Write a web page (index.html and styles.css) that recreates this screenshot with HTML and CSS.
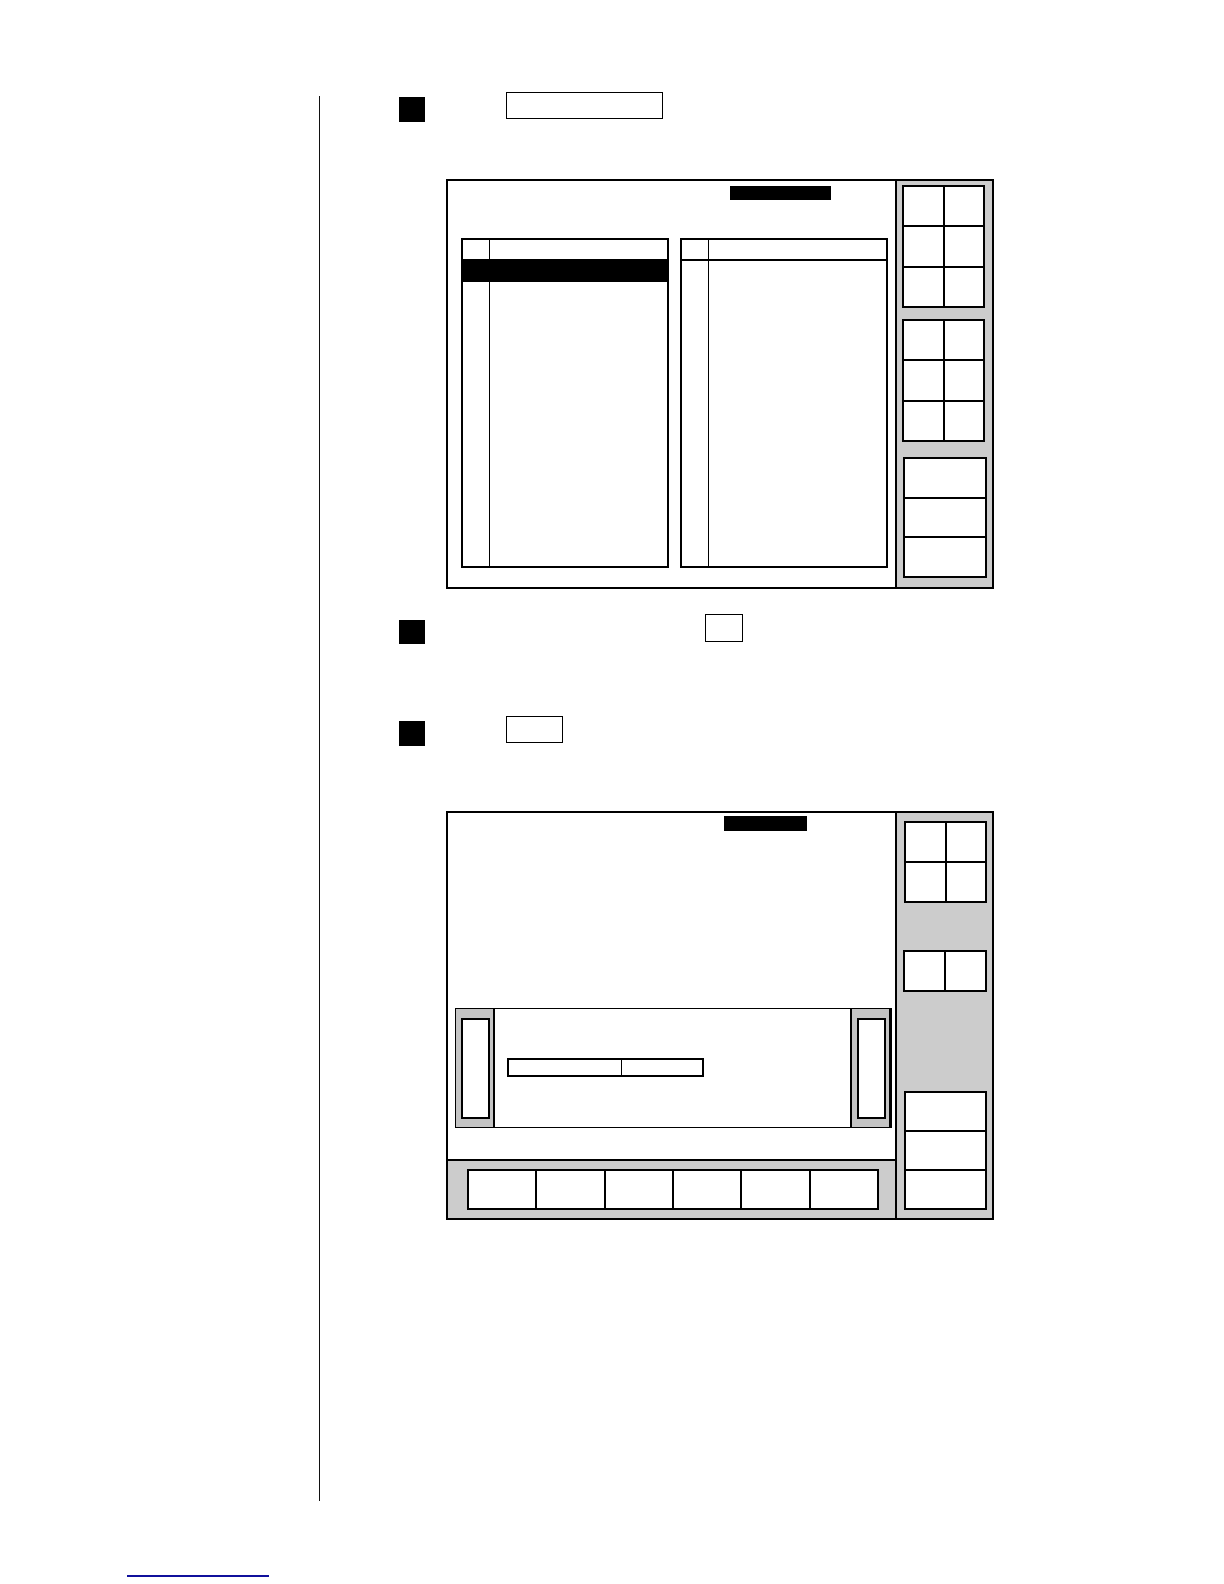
FILE: index.html
```html
<!DOCTYPE html>
<html>
<head>
<meta charset="utf-8">
<title>Screen procedure</title>
<link rel="stylesheet" href="styles.css">
</head>
<body>
<div class="page">
  <div class="rule"></div>
  <div class="content">
    <div class="step step1">
      <div class="num"></div>
      <div class="key key-wide"></div>
    </div>

    <div class="screen screen1">
      <div class="main">
        <div class="title title1"></div>
        <div class="lists">
          <div class="list">
            <div class="lh"><div class="c1"></div><div class="c2"></div></div>
            <div class="hl"></div>
            <div class="lb"><div class="c1"></div><div class="c2"></div></div>
          </div>
          <div class="list">
            <div class="lh"><div class="c1"></div><div class="c2"></div></div>
            <div class="lb"><div class="c1"></div><div class="c2"></div></div>
          </div>
        </div>
      </div>
      <div class="side side1">
        <div class="kgrid g23 s1a"><i></i><i></i><i></i><i></i><i></i><i></i></div>
        <div class="kgrid g23 s1b"><i></i><i></i><i></i><i></i><i></i><i></i></div>
        <div class="kgrid g13 s1c"><i></i><i></i><i></i></div>
      </div>
    </div>

    <div class="step step2">
      <div class="num"></div>
      <div class="key key-small"></div>
    </div>

    <div class="step step3">
      <div class="num"></div>
      <div class="key key-mid"></div>
    </div>

    <div class="screen screen2">
      <div class="main">
        <div class="title title2"></div>
        <div class="dialog">
          <div class="dpanel dleft"><div class="dbar"></div></div>
          <div class="dbody">
            <div class="field"><div class="f1"></div><div class="f2"></div></div>
          </div>
          <div class="dpanel dright"><div class="dbar"></div></div>
        </div>
        <div class="toolbar">
          <div class="tkeys"><i></i><i></i><i></i><i></i><i></i><i></i></div>
        </div>
      </div>
      <div class="side side2">
        <div class="kgrid g22 s2a"><i></i><i></i><i></i><i></i></div>
        <div class="kgrid g21 s2b"><i></i><i></i></div>
        <div class="kgrid g13 s2c"><i></i><i></i><i></i></div>
      </div>
    </div>
  </div>
</div>
<div class="footer"><div class="footline"></div></div>
</body>
</html>
```

FILE: styles.css
```css
* { box-sizing: border-box; }
html, body { margin: 0; padding: 0; background: #fff; }
body { font-family: "Liberation Sans", Arial, sans-serif; width: 1224px; }

.page { display: flex; align-items: flex-start; }
.rule { width: 1px; height: 1405px; margin: 96px 0 0 319px; background: #111; flex: none; }
.content { padding-top: 92px; display: flex; flex-direction: column; }

.step { display: flex; align-items: flex-start; }
.num { width: 26px; height: 25px; background: #000; margin-left: 79px; flex: none; }
.step1 .num { margin-top: 5px; }
.step2 { margin-top: 25px; }
.step2 .num { margin-top: 6px; height: 24px; }
.step3 { margin-top: 72px; }
.step3 .num { margin-top: 5px; }
.key { border: 1px solid #000; background: #fff; flex: none; }
.key-wide { width: 157px; height: 27px; margin-left: 81px; }
.key-small { width: 38px; height: 28px; margin-left: 280px; }
.key-mid { width: 57px; height: 27px; margin-left: 81px; }

.screen { display: flex; width: 548px; border: 2px solid #000; margin-left: 126px; flex: none; }
.screen1 { height: 410px; margin-top: 57px; }
.screen2 { height: 409px; margin-top: 65px; }
.main { width: 449px; border-right: 2px solid #000; background: #fff; display: flex; flex-direction: column; flex: none; }
.side { flex: 1; background: #cccccc; display: flex; flex-direction: column; }

.title { background: #000; flex: none; }
.title1 { width: 101px; height: 14px; margin: 5px 0 0 282px; }
.title2 { width: 83px; height: 15px; margin: 3px 0 0 276px; }

.lists { display: flex; gap: 11px; margin: 38px 0 0 13px; }
.list { width: 208px; height: 330px; border: 2px solid #000; display: flex; flex-direction: column; }
.lh { height: 21px; border-bottom: 2px solid #000; display: flex; flex: none; }
.hl { height: 21px; background: #000; flex: none; }
.lb { flex: 1; display: flex; }
.c1 { width: 27px; border-right: 1px solid #000; flex: none; }
.c2 { flex: 1; }

.kgrid { display: grid; gap: 2px; background: #000; border: 2px solid #000; flex: none; }
.kgrid i { display: block; background: #fff; }
.g23 { grid-template-columns: 1fr 1fr; grid-template-rows: 1fr 1fr 1fr; }
.g22 { grid-template-columns: 1fr 1fr; grid-template-rows: 1fr 1fr; }
.g21 { grid-template-columns: 1fr 1fr; grid-template-rows: 1fr; }
.g13 { grid-template-columns: 1fr; grid-template-rows: 1fr 1fr 1fr; }

.s1a { width: 83px; height: 123px; margin: 4px 0 0 5px; }
.s1b { width: 83px; height: 123px; margin: 11px 0 0 5px; }
.s1c { width: 84px; height: 121px; margin: 15px 0 0 6px; }
.s2a { width: 83px; height: 82px; margin: 8px 0 0 7px; }
.s2b { width: 84px; height: 42px; margin: 47px 0 0 6px; }
.s2c { width: 83px; height: 119px; margin: 99px 0 0 7px; }

.dialog { display: flex; width: 437px; height: 120px; margin: 177px 0 0 7px; border: 1px solid #000; flex: none; }
.dpanel { background: #c4c4c4; flex: none; padding-top: 9px; }
.dleft { width: 39px; border-right: 2px solid #000; padding-left: 5px; }
.dright { width: 41px; border-left: 2px solid #000; border-right: 2px solid #000; padding-left: 5px; }
.dbar { width: 29px; height: 101px; border: 2px solid #000; background: #fff; }
.dbody { flex: 1; background: #fff; padding: 49px 0 0 12px; }
.field { display: flex; width: 197px; height: 19px; border: 2px solid #000; }
.f1 { width: 113px; border-right: 1px solid #000; }
.f2 { flex: 1; }

.toolbar { margin-top: auto; height: 59px; border-top: 2px solid #000; background: #cccccc; padding: 8px 0 0 19px; flex: none; }
.tkeys { display: grid; grid-template-columns: repeat(6, 1fr); gap: 2px; background: #000; border: 2px solid #000; width: 412px; height: 41px; }
.tkeys i { display: block; background: #fff; }

.footer { padding: 74px 0 0 127px; }
.footline { width: 142px; height: 2px; background: #10109c; }
```
